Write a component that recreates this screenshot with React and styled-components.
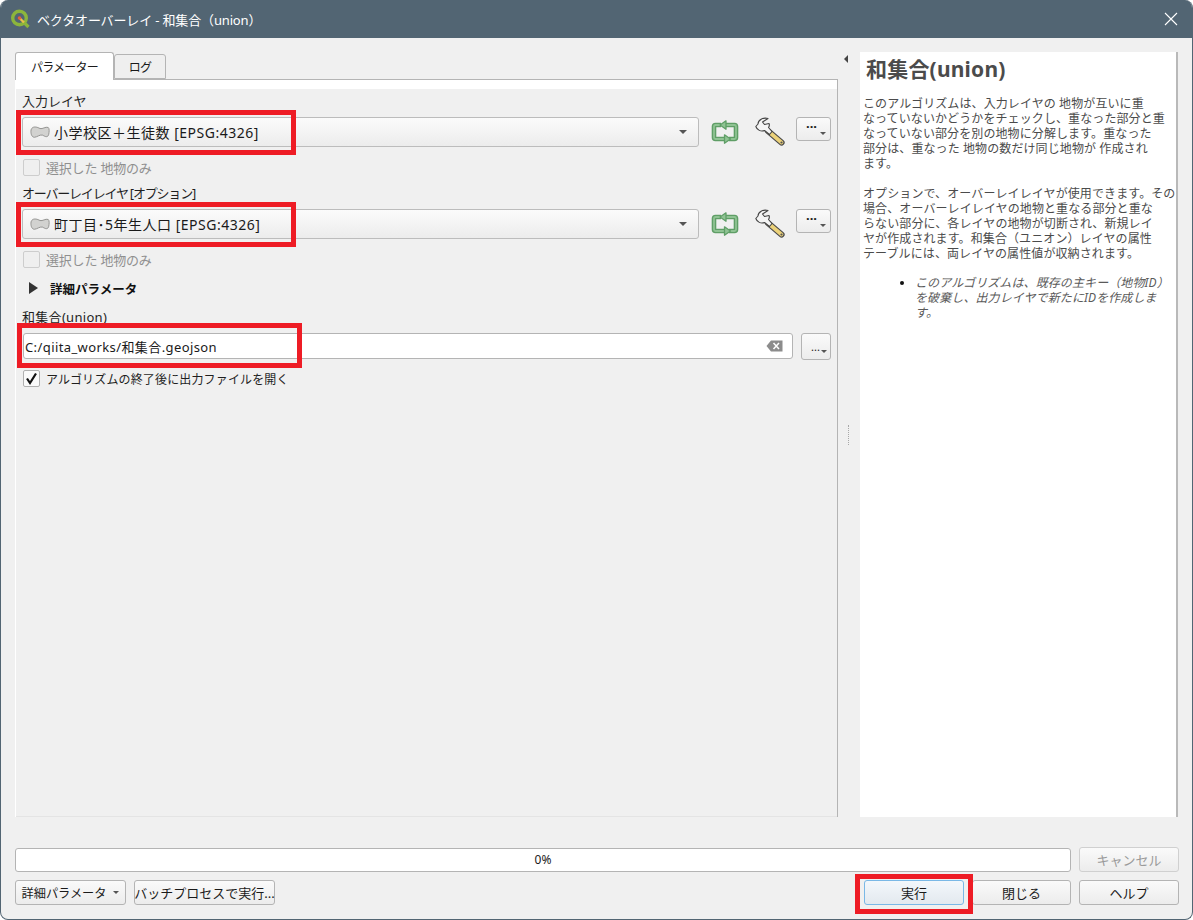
import React from 'react';
import styled, { createGlobalStyle } from 'styled-components';

const GlobalStyle = createGlobalStyle`
    html, body {
        margin: 0;
        padding: 0;
        background: #ffffff;
    }
    body {
        font-family: "Noto Sans", "Noto Sans CJK JP", sans-serif;
        font-size: 13px;
        color: #1a1a1a;
    }
`;

const Window = styled.div`
    position: relative;
    width: 1193px;
    height: 920px;
    box-sizing: border-box;
    display: flex;
    flex-direction: column;
    background: #f0f0f0;
    border: 1px solid #526573;
    border-top: none;
    border-radius: 8px;
    overflow: hidden;
`;
const TitleBar = styled.div`
    height: 38px;
    flex: none;
    background: #526573;
    color: #ffffff;
    display: flex;
    align-items: center;
    padding: 0 14px 0 9px;
    gap: 7px;
    font-size: 13px;
`;
const TitleText = styled.div`
    flex: 1;
    letter-spacing: -0.15px;
`;
const Body = styled.div`
    flex: 1;
    display: flex;
    flex-direction: column;
    padding: 14px 13px 14px 14px;
    min-height: 0;
`;
const Split = styled.div`
    height: 765px;
    flex: none;
    margin-right: 1px;
    display: flex;
`;
const LeftColumn = styled.div`
    width: 823px;
    flex: none;
    display: flex;
    flex-direction: column;
`;
const Tabs = styled.div`
    height: 27px;
    flex: none;
    display: flex;
    align-items: flex-end;
`;
const Tab = styled.div`
    box-sizing: border-box;
    width: ${({ $w }) => $w}px;
    height: ${({ $active }) => ($active ? 28 : 25)}px;
    margin-bottom: ${({ $active }) => ($active ? -1 : 0)}px;
    background: ${({ $active }) => ($active ? '#ffffff' : '#efefef')};
    border: 1px solid #b4b4b4;
    border-bottom: ${({ $active }) => ($active ? 'none' : '1px solid #b4b4b4')};
    border-radius: 3px 3px 0 0;
    display: flex;
    align-items: center;
    justify-content: center;
    font-size: 12px;
    letter-spacing: -0.8px;
    position: relative;
    z-index: 1;
`;
const Pane = styled.div`
    flex: 1;
    box-sizing: border-box;
    border-top: 1px solid #b4b4b4;
    border-right: 1px solid #b4b4b4;
    border-left: 1px solid #ffffff;
    padding-top: 9px;
    background: #ffffff;
    display: flex;
    flex-direction: column;
`;
const Params = styled.div`
    flex: 1;
    background: #f0f0f0;
    padding: 4px 6px 0 6px;
    border-bottom: 1px solid #e4e4e4;
`;
const Label = styled.div`
    height: 16px;
    line-height: 16px;
    font-size: 13px;
    letter-spacing: ${({ $ls }) => $ls ?? 0}px;
    color: #1f1f1f;
    margin-bottom: 8px;
    white-space: nowrap;
`;
const WidgetRow = styled.div`
    display: flex;
    align-items: center;
    height: 30px;
`;
const Combo = styled.div`
    box-sizing: border-box;
    width: 677px;
    height: 30px;
    flex: none;
    display: flex;
    align-items: center;
    padding: 0 11px 0 7px;
    gap: 4px;
    border: 1px solid #bcbcbc;
    border-radius: 3px;
    background: linear-gradient(#fbfbfb, #ececec);
    font-size: 14px;
    white-space: nowrap;
`;
const ComboText = styled.div`
    flex: 1;
    letter-spacing: 0.5px;
`;
const Caret = styled.div`
    width: 0;
    height: 0;
    border-left: ${({ $s }) => $s}px solid transparent;
    border-right: ${({ $s }) => $s}px solid transparent;
    border-top: ${({ $s }) => $s}px solid #555555;
`;
const IconSlot = styled.div`
    flex: none;
    width: ${({ $w }) => $w}px;
    margin-left: ${({ $ml }) => $ml}px;
    display: flex;
    align-items: center;
    justify-content: center;
`;
const DotsButton = styled.div`
    position: relative;
    box-sizing: border-box;
    flex: none;
    width: 35px;
    height: 24px;
    margin-left: 10px;
    margin-top: -6px;
    border: 1px solid #b4b4b4;
    border-radius: 3px;
    background: linear-gradient(#fafafa, #ececec);
    font-size: 13px;
    font-weight: 700;
    line-height: 16px;
    padding-left: 9px;
    & > i {
        position: absolute;
        right: 4px;
        bottom: 5px;
    }
`;
const CheckRow = styled.div`
    display: flex;
    align-items: center;
    gap: 6px;
    height: 17px;
    margin-top: ${({ $mt }) => $mt}px;
    margin-bottom: ${({ $mb }) => $mb}px;
    margin-left: 1px;
    font-size: ${({ $off }) => ($off ? 13 : 12)}px;
    letter-spacing: ${({ $off }) => ($off ? -0.2 : 0.15)}px;
    color: ${({ $off }) => ($off ? '#8f8f8f' : '#1f1f1f')};
    white-space: nowrap;
`;
const CheckBox = styled.div`
    box-sizing: border-box;
    width: 17px;
    height: 17px;
    flex: none;
    border: 1px solid ${({ $off }) => ($off ? '#cdcdcd' : '#b0b0b0')};
    border-radius: 2px;
    background: ${({ $off }) => ($off ? '#efefef' : '#fafafa')};
    display: flex;
    align-items: center;
    justify-content: center;
`;
const Collapse = styled.div`
    display: flex;
    align-items: center;
    gap: 12px;
    height: 16px;
    margin: 12px 0 13px 7px;
    font-weight: 700;
    font-size: 12.5px;
    color: #111111;
`;
const Triangle = styled.div`
    width: 0;
    height: 0;
    border-top: 6px solid transparent;
    border-bottom: 6px solid transparent;
    border-left: 9px solid #333333;
`;
const OutputRow = styled.div`
    display: flex;
    align-items: flex-start;
    height: 27px;
    margin-left: 1px;
`;
const OutputField = styled.div`
    box-sizing: border-box;
    width: 770px;
    height: 26px;
    flex: none;
    display: flex;
    align-items: center;
    justify-content: space-between;
    padding: 0 9px 0 1px;
    background: #ffffff;
    border: 1px solid #b4b4b4;
    border-radius: 3px;
    font-size: 13px;
    letter-spacing: 0.4px;
`;
const SmallDots = styled.div`
    position: relative;
    box-sizing: border-box;
    flex: none;
    width: 30px;
    height: 27px;
    margin-left: 8px;
    border: 1px solid #b4b4b4;
    border-radius: 3px;
    background: linear-gradient(#fafafa, #ececec);
    font-size: 11px;
    line-height: 25px;
    padding-left: 9px;
    & > i {
        position: absolute;
        right: 3px;
        bottom: 6px;
    }
`;
const Handle = styled.div`
    width: 22px;
    flex: none;
    position: relative;
    display: flex;
    align-items: center;
    justify-content: center;
`;
const HandleDots = styled.div`
    width: 1px;
    height: 20px;
    border-left: 1px dotted #a8a8a8;
`;
const CollapseArrow = styled.div`
    position: absolute;
    top: 3px;
    left: 6px;
    width: 0;
    height: 0;
    border-top: 4px solid transparent;
    border-bottom: 4px solid transparent;
    border-right: 4px solid #444444;
`;
const Help = styled.div`
    flex: 1;
    box-sizing: border-box;
    background: #ffffff;
    border-right: 2px solid #b9b9b9;
    padding: 4px 5px 0 3px;
    font-size: 12px;
    line-height: 15px;
    letter-spacing: 0.1px;
    white-space: nowrap;
    color: #4b4b4b;
    min-width: 0;
`;
const HelpTitle = styled.h3`
    margin: 0 0 14px 3px;
    font-size: 21px;
    line-height: 26px;
    font-weight: 700;
    letter-spacing: 0.2px;
    color: #4b4b4b;
`;
const HelpPara = styled.p`
    margin: 0 0 ${({ $mb }) => $mb}px 0;
`;
const HelpList = styled.ul`
    margin: 0;
    padding-left: 52px;
    font-style: italic;
    color: #5a5a5a;
    & li::marker {
        color: #111111;
    }
`;
const Footer = styled.div`
    margin-top: 30px;
    display: flex;
    flex-direction: column;
    gap: 8px;
`;
const FooterRow = styled.div`
    display: flex;
    align-items: center;
    justify-content: space-between;
`;
const Progress = styled.div`
    box-sizing: border-box;
    width: 1056px;
    height: 24px;
    background: #ffffff;
    border: 1px solid #b4b4b4;
    border-radius: 3px;
    display: flex;
    align-items: center;
    justify-content: center;
    font-size: 12px;
`;
const Group = styled.div`
    display: flex;
    gap: ${({ $gap }) => $gap}px;
`;
const Button = styled.div`
    box-sizing: border-box;
    width: ${({ $w }) => $w}px;
    height: 25px;
    display: flex;
    align-items: center;
    justify-content: center;
    gap: 7px;
    font-size: ${({ $fs }) => $fs ?? 13}px;
    white-space: nowrap;
    border: 1px solid ${({ $primary, $off }) => ($primary ? '#7ab8e6' : $off ? '#d0d0d0' : '#b4b4b4')};
    border-radius: 3px;
    background: ${({ $primary }) =>
        $primary ? 'linear-gradient(#f3f7fb, #e3e9ef)' : 'linear-gradient(#fafafa, #ececec)'};
    color: ${({ $off }) => ($off ? '#9a9a9a' : '#1a1a1a')};
`;
const RedBox = styled.div`
    position: absolute;
    box-sizing: border-box;
    left: ${({ $x }) => $x}px;
    top: ${({ $y }) => $y}px;
    width: ${({ $w }) => $w}px;
    height: ${({ $h }) => $h}px;
    border: 5px solid #ee1c25;
    pointer-events: none;
`;

const QgisLogo = () => (
    <svg width="20" height="20" viewBox="0 0 20 20">
        <circle cx="9.5" cy="9" r="6.8" fill="none" stroke="#8cb53c" strokeWidth="3.4" />
        <path d="M13 12.5 L18.5 18" stroke="#8cb53c" strokeWidth="3.2" />
        <path d="M10 9.5 L14 13.5" stroke="#e9c04a" strokeWidth="2.4" />
        <circle cx="9.5" cy="9" r="1.8" fill="#e8603a" />
    </svg>
);

const CloseIcon = () => (
    <svg width="14" height="14" viewBox="0 0 14 14">
        <path d="M1 1 L13 13 M13 1 L1 13" stroke="#ffffff" strokeWidth="1.1" />
    </svg>
);

const PolygonIcon = () => (
    <svg width="20" height="14" viewBox="0 0 22 14">
        <path
            d="M2 3 C4 0.5 8 1.5 11 3.2 C14 4 17 0.8 20 2 C21.5 3 21.2 7 20.5 10 C19.5 13 17 12.5 14 10.5 C11 9.5 8 12.5 5 12.8 C2 13 1 9 1 6.5 C1 5 1.2 4 2 3 Z"
            fill="#d2d2d0"
            stroke="#8c8c8a"
            strokeWidth="1"
        />
    </svg>
);

const loopLeft = 'M10 5 H4.5 Q3 5 3 6.5 V17.5 Q3 19 4.5 19 H14';
const loopRight = 'M14 5 H23.5 Q25 5 25 6.5 V17.5 Q25 19 23.5 19 H18';

const RefreshIcon = () => (
    <svg width="28" height="24" viewBox="0 0 28 24">
        <g fill="none" strokeLinejoin="round">
            <path d={loopLeft} stroke="#5f9e66" strokeWidth="4.6" />
            <path d={loopRight} stroke="#5f9e66" strokeWidth="4.6" />
            <path d={loopLeft} stroke="#8fc393" strokeWidth="1.8" />
            <path d={loopRight} stroke="#8fc393" strokeWidth="1.8" />
        </g>
        <path d="M15 0.8 L9 5 L15 9.2 Z" fill="#8fc393" stroke="#5f9e66" strokeWidth="1.3" strokeLinejoin="round" />
        <path d="M13.5 14.8 L19.5 19 L13.5 23.2 Z" fill="#8fc393" stroke="#5f9e66" strokeWidth="1.3" strokeLinejoin="round" />
    </svg>
);

const WrenchIcon = () => (
    <svg width="32" height="30" viewBox="0 0 32 30">
        <path d="M14 14 L27.5 25.5" stroke="#4a4a4a" strokeWidth="6.2" strokeLinecap="round" />
        <path d="M14 14 L27.5 25.5" stroke="#ecd27a" strokeWidth="3.8" strokeLinecap="round" />
        <path
            d="M14 1.5 C9 0 4 3 4 7 L1.8 9.5 C3 13 7 15 10.5 13.5 L15.5 17.5 L18 14.5 L14.5 10.5 C15.5 9 15.5 7.5 15 6.5 L10.5 7.5 L8.5 5 Z"
            fill="#f4f4f4"
            stroke="#444444"
            strokeWidth="1.1"
            strokeLinejoin="round"
        />
        <circle cx="27.5" cy="25.5" r="1.1" fill="#555555" />
    </svg>
);

const ClearIcon = () => (
    <svg width="17" height="12" viewBox="0 0 17 12">
        <path d="M5 0.5 H16.5 V11.5 H5 L0.5 6 Z" fill="#8c8c8c" />
        <path d="M7.5 3 L13 9 M13 3 L7.5 9" stroke="#ffffff" strokeWidth="1.5" />
    </svg>
);

const CheckMark = () => (
    <svg width="13" height="13" viewBox="0 0 13 13">
        <path d="M2 6.5 L5 11 L11 1.5" fill="none" stroke="#111111" strokeWidth="2.2" />
    </svg>
);

const LayerWidget = ({ text }) => (
    <WidgetRow>
        <Combo>
            <PolygonIcon />
            <ComboText>{text}</ComboText>
            <Caret $s={4} />
        </Combo>
        <IconSlot $w={28} $ml={12}><RefreshIcon /></IconSlot>
        <IconSlot $w={32} $ml={15}><WrenchIcon /></IconSlot>
        <DotsButton>
            ···
            <i><Caret $s={3} /></i>
        </DotsButton>
    </WidgetRow>
);

const App = () => {
    return (
        <>
            <GlobalStyle />
            <Window>
                <TitleBar>
                    <QgisLogo />
                    <TitleText>ベクタオーバーレイ - 和集合（union）</TitleText>
                    <CloseIcon />
                </TitleBar>
                <Body>
                    <Split>
                        <LeftColumn>
                            <Tabs>
                                <Tab $active $w={99}>パラメーター</Tab>
                                <Tab $w={52}>ログ</Tab>
                            </Tabs>
                            <Pane>
                                <Params>
                                    <Label>入力レイヤ</Label>
                                    <LayerWidget text="小学校区＋生徒数 [EPSG:4326]" />
                                    <CheckRow $off $mt={12} $mb={9}>
                                        <CheckBox $off />
                                        選択した 地物のみ
                                    </CheckRow>
                                    <Label $ls={-1.2}>オーバーレイレイヤ [オプション]</Label>
                                    <LayerWidget text="町丁目･5年生人口 [EPSG:4326]" />
                                    <CheckRow $off $mt={12} $mb={0}>
                                        <CheckBox $off />
                                        選択した 地物のみ
                                    </CheckRow>
                                    <Collapse>
                                        <Triangle />
                                        詳細パラメータ
                                    </Collapse>
                                    <Label $ls={0.3}>和集合(union)</Label>
                                    <OutputRow>
                                        <OutputField>
                                            C:/qiita_works/和集合.geojson
                                            <ClearIcon />
                                        </OutputField>
                                        <SmallDots>
                                            ...
                                            <i><Caret $s={3} /></i>
                                        </SmallDots>
                                    </OutputRow>
                                    <CheckRow $mt={10} $mb={0}>
                                        <CheckBox><CheckMark /></CheckBox>
                                        アルゴリズムの終了後に出力ファイルを開く
                                    </CheckRow>
                                </Params>
                            </Pane>
                        </LeftColumn>
                        <Handle>
                            <CollapseArrow />
                            <HandleDots />
                        </Handle>
                        <Help>
                            <HelpTitle>和集合(union)</HelpTitle>
                            <HelpPara $mb={15}>
                                このアルゴリズムは、入力レイヤの 地物が互いに重
                                <br />なっていないかどうかをチェックし、重なった部分と重
                                <br />なっていない部分を別の地物に分解します。重なった
                                <br />部分は、重なった 地物の数だけ同じ地物が 作成され
                                <br />ます。
                            </HelpPara>
                            <HelpPara $mb={14}>
                                オプションで、オーバーレイレイヤが使用できます。その
                                <br />場合、オーバーレイレイヤの地物と重なる部分と重な
                                <br />らない部分に、各レイヤの地物が切断され、新規レイ
                                <br />ヤが作成されます。和集合（ユニオン）レイヤの属性
                                <br />テーブルには、両レイヤの属性値が収納されます。
                            </HelpPara>
                            <HelpList>
                                <li>
                                    このアルゴリズムは、既存の主キー（地物ID）
                                    <br />を破棄し、出力レイヤで新たにIDを作成しま
                                    <br />す。
                                </li>
                            </HelpList>
                        </Help>
                    </Split>
                    <Footer>
                        <FooterRow>
                            <Progress>0%</Progress>
                            <Button $off $w={100}>キャンセル</Button>
                        </FooterRow>
                        <FooterRow>
                            <Group $gap={8}>
                                <Button $fs={12.2} $w={111}>
                                    詳細パラメータ
                                    <Caret $s={3} />
                                </Button>
                                <Button $w={141}>バッチプロセスで実行...</Button>
                            </Group>
                            <Group $gap={8}>
                                <Button $primary $w={100}>実行</Button>
                                <Button $w={99}>閉じる</Button>
                                <Button $w={100}>ヘルプ</Button>
                            </Group>
                        </FooterRow>
                    </Footer>
                </Body>
                <RedBox $x={15} $y={110} $w={280} $h={45} />
                <RedBox $x={15} $y={202} $w={280} $h={45} />
                <RedBox $x={16} $y={323} $w={285} $h={45} />
                <RedBox $x={854} $y={874} $w={118} $h={40} />
            </Window>
        </>
    );
};

export default App;
